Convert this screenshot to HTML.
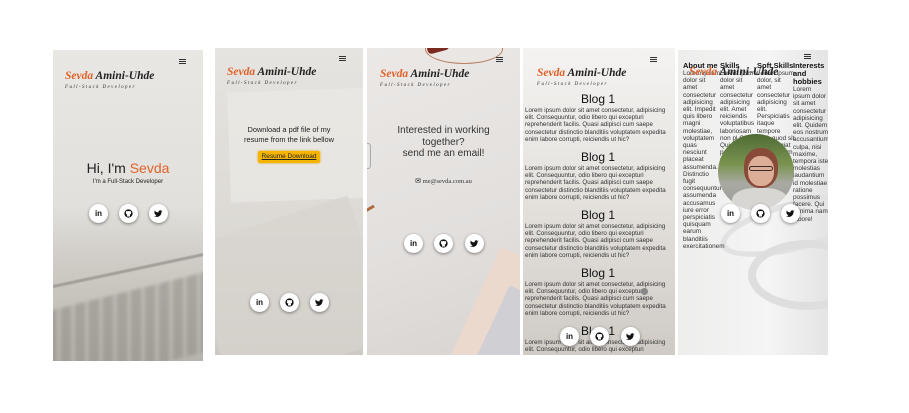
<!DOCTYPE html>
<html><head><meta charset="utf-8"><style>
*{margin:0;padding:0;box-sizing:border-box}
body{width:909px;height:413px;background:#fff;position:relative;overflow:hidden;font-family:"Liberation Sans",sans-serif;color:#222}
.p{position:absolute;overflow:hidden}
.a{position:absolute}
.ham{position:absolute;width:7px;height:5px;border-top:1px solid #333;border-bottom:1px solid #333}
.ham:after{content:"";position:absolute;left:0;right:0;top:1px;border-top:1px solid #333}
.logo{position:absolute;font-family:"Liberation Serif",serif;font-style:italic;font-weight:bold;font-size:11.5px;white-space:nowrap;color:#222}
.logo b{color:#e0632a}
.sub{position:absolute;font-family:"Liberation Serif",serif;font-style:italic;font-size:5px;letter-spacing:1.4px;color:#333;white-space:nowrap}
.ic{position:absolute;width:19px;height:19px;border-radius:50%;background:#fff;box-shadow:0 1px 3px rgba(0,0,0,.45);font-size:8px;font-weight:bold;text-align:center;line-height:19px;color:#111}
.ic svg{position:absolute;left:5px;top:5px;width:9px;height:9px}
.ct{position:absolute;text-align:center;white-space:nowrap}
.blog{position:absolute;left:2px;width:146px;font-size:6.2px;line-height:7.2px;color:#333}
.blog h3{text-align:center;font-size:12px;line-height:13px;font-weight:normal;color:#111;margin-bottom:1px}
.col{position:absolute;font-size:6.4px;line-height:7.2px;color:#333}
.col h4{font-size:7.5px;line-height:8px;color:#111}
</style></head><body>
<svg width="0" height="0" style="position:absolute">
<symbol id="gh" viewBox="0 0 24 24"><circle cx="12" cy="12" r="11" fill="#111"/><path d="M8 20v-3c0-1 .5-1.5 1-2-3-.5-4-2-4-5 0-1 .4-2 1-2.6-.2-.6-.2-1.6.2-2.4 1 0 2 .6 2.6 1.1a8 8 0 0 1 6.4 0C15.8 5.6 16.8 5 17.8 5c.4.8.4 1.8.2 2.4.6.6 1 1.6 1 2.6 0 3-1 4.5-4 5 .5.5 1 1 1 2v3z" fill="#fff"/></symbol>
<symbol id="tw" viewBox="0 0 24 24"><path d="M23 4a9 9 0 0 1-3 1 4.5 4.5 0 0 0-8 3v1A11 11 0 0 1 2 4s-4 9 5 13a12 12 0 0 1-7 2c9 5 20 0 20-11.5V7a8 8 0 0 0 3-3z" fill="#111"/></symbol>
</svg>

<!-- Panel 1 -->
<div class="p" style="left:53px;top:50px;width:150px;height:311px;background:linear-gradient(#e9e7e3 0%,#e2e0dc 50%,#cfccc6 68%,#b8b4ad 100%)">
 <div class="a" style="left:-20px;top:240px;width:200px;height:80px;transform:skewY(-14deg);background:repeating-linear-gradient(90deg,#8f8c86 0 10px,#b3afa8 10px 14px);opacity:.55;filter:blur(1.5px)"></div>
 <div class="a" style="left:-10px;top:218px;width:180px;height:3px;background:#a19e97;transform:skewY(-12deg);filter:blur(.6px)"></div>
 <div class="ham" style="left:126px;top:9px"></div>
 <div class="logo" style="left:12px;top:20px"><b>Sevda</b> Amini-Uhde</div>
 <div class="sub" style="left:12px;top:35px">Full-Stack Developer</div>
 <div class="ct" style="left:0;width:150px;top:110px;font-size:14px">Hi, I'm <span style="color:#e0632a">Sevda</span></div>
 <div class="ct" style="left:0;width:150px;top:129px;font-size:6px">I'm a Full-Stack Developer</div>
 <div class="ic" style="left:36px;top:154px">in</div>
 <div class="ic" style="left:66px;top:154px"><svg><use href="#gh"/></svg></div>
 <div class="ic" style="left:96px;top:154px"><svg><use href="#tw"/></svg></div>
</div>

<!-- Panel 2 -->
<div class="p" style="left:215px;top:48px;width:148px;height:307px;background:linear-gradient(#e6e4e0,#dcd9d4 60%,#cdc9c3)">
 <div class="a" style="left:14px;top:42px;width:150px;height:110px;background:#ebe9e6;transform:rotate(-2deg);opacity:.7"></div>
 <div class="a" style="left:-10px;top:170px;width:170px;height:150px;background:#d7d4cf;transform:rotate(-18deg);opacity:.7"></div>
 <div class="ham" style="left:124px;top:8px"></div>
 <div class="logo" style="left:12px;top:18px"><b>Sevda</b> Amini-Uhde</div>
 <div class="sub" style="left:12px;top:33px">Full-Stack Developer</div>
 <div class="ct" style="left:0;width:148px;top:77px;font-size:7.4px;line-height:9.5px">Download a pdf file of my<br>resume from the link bellow</div>
 <div class="a" style="left:43px;top:103px;width:62px;height:12px;background:#f5b400;border-radius:2px;box-shadow:0 0 2px #e0a000;font-size:6.5px;line-height:12px;text-align:center;text-decoration:underline">Resume Download</div>
 <div class="ic" style="left:35px;top:245px">in</div>
 <div class="ic" style="left:65px;top:245px"><svg><use href="#gh"/></svg></div>
 <div class="ic" style="left:95px;top:245px"><svg><use href="#tw"/></svg></div>
</div>

<!-- Panel 3 -->
<div class="p" style="left:367px;top:48px;width:153px;height:307px;background:linear-gradient(160deg,#ebe8e6,#e2dfdd 60%,#d8d4d2)">
 <div class="a" style="left:58px;top:-14px;width:78px;height:30px;border:1.5px solid #b88060;border-radius:50%"></div>
 <div class="a" style="left:60px;top:-6px;width:22px;height:10px;background:#7a2a1e;border-radius:4px;transform:rotate(-15deg)"></div>
 <div class="a" style="left:105px;top:210px;width:80px;height:120px;background:#ecd9ce;transform:rotate(25deg)"></div>
 <div class="a" style="left:120px;top:250px;width:80px;height:90px;background:#cfcfd4;transform:rotate(25deg)"></div>
 <div class="a" style="left:-10px;top:95px;width:14px;height:26px;background:#e6e4e2;border:1px solid #aaa;border-radius:3px"></div>
 <div class="a" style="left:-6px;top:160px;width:14px;height:3px;background:#b06a40;transform:rotate(-30deg)"></div>
 <div class="ham" style="left:129px;top:9px"></div>
 <div class="logo" style="left:13px;top:20px"><b>Sevda</b> Amini-Uhde</div>
 <div class="sub" style="left:13px;top:35px">Full-Stack Developer</div>
 <div class="ct" style="left:0;width:153px;top:77px;font-size:10px;line-height:11.5px;color:#333">Interested in working<br>together?<br>send me an email!</div>
 <div class="ct" style="left:0;width:153px;top:129px;font-size:6.5px;font-family:'Liberation Serif',serif;color:#333"><span style="font-family:'DejaVu Sans';font-size:7px;color:#111">✉</span> me@sevda.com.au</div>
 <div class="ic" style="left:37px;top:186px">in</div>
 <div class="ic" style="left:67px;top:186px"><svg><use href="#gh"/></svg></div>
 <div class="ic" style="left:98px;top:186px"><svg><use href="#tw"/></svg></div>
</div>

<!-- Panel 4 -->
<div class="p" style="left:523px;top:48px;width:152px;height:307px;background:linear-gradient(#f4f3f1,#e4e1dd 50%,#cfcac4)">
 <div class="ham" style="left:127px;top:9px"></div>
 <div class="logo" style="left:14px;top:19px"><b>Sevda</b> Amini-Uhde</div>
 <div class="sub" style="left:14px;top:34px">Full-Stack Developer</div>
 <div class="blog" style="top:45px"><h3>Blog 1</h3>Lorem ipsum dolor sit amet consectetur, adipisicing elit. Consequuntur, odio libero qui excepturi reprehenderit facilis. Quasi adipisci cum saepe consectetur distinctio blanditiis voluptatem expedita enim labore corrupti, reiciendis ut hic?</div>
 <div class="blog" style="top:103px"><h3>Blog 1</h3>Lorem ipsum dolor sit amet consectetur, adipisicing elit. Consequuntur, odio libero qui excepturi reprehenderit facilis. Quasi adipisci cum saepe consectetur distinctio blanditiis voluptatem expedita enim labore corrupti, reiciendis ut hic?</div>
 <div class="blog" style="top:161px"><h3>Blog 1</h3>Lorem ipsum dolor sit amet consectetur, adipisicing elit. Consequuntur, odio libero qui excepturi reprehenderit facilis. Quasi adipisci cum saepe consectetur distinctio blanditiis voluptatem expedita enim labore corrupti, reiciendis ut hic?</div>
 <div class="blog" style="top:219px"><h3>Blog 1</h3>Lorem ipsum dolor sit amet consectetur, adipisicing elit. Consequuntur, odio libero qui excepturi reprehenderit facilis. Quasi adipisci cum saepe consectetur distinctio blanditiis voluptatem expedita enim labore corrupti, reiciendis ut hic?</div>
 <div class="blog" style="top:277px"><h3>Blog 1</h3>Lorem ipsum dolor sit amet consectetur, adipisicing elit. Consequuntur, odio libero qui excepturi</div>
 <div class="a" style="left:118px;top:240px;width:7px;height:7px;border-radius:50%;background:#888"></div>
 <div class="ic" style="left:37px;top:279px">in</div>
 <div class="ic" style="left:67px;top:279px"><svg><use href="#gh"/></svg></div>
 <div class="ic" style="left:98px;top:279px"><svg><use href="#tw"/></svg></div>
</div>

<!-- Panel 5 -->
<div class="p" style="left:678px;top:50px;width:150px;height:305px;background:linear-gradient(90deg,#ededec,#f5f5f5 60%,#e4e4e4)">
 <div class="a" style="left:40px;top:150px;width:160px;height:50px;border-radius:50%;border:6px solid #e2e2e2;transform:rotate(-15deg)"></div>
 <div class="a" style="left:70px;top:190px;width:120px;height:70px;border-radius:50%;border:8px solid #dedede"></div>
 <div class="ham" style="left:126px;top:4px"></div>
 <div class="col" style="left:5px;top:12px;width:38px"><h4>About me</h4>Lorem ipsum dolor sit amet consectetur adipisicing elit. Impedit quis libero magni molestiae, voluptatem quas nesciunt placeat assumenda. Distinctio fugit consequuntur assumenda accusamus iure error perspiciatis quisquam earum blanditiis exercitationem</div>
 <div class="col" style="left:42px;top:12px;width:38px"><h4>Skills</h4>Lorem ipsum dolor sit amet consectetur adipisicing elit. Amet reiciendis voluptatibus laboriosam non pl Quia Qui perspiciatis obcaecati quos deleniti?</div>
 <div class="col" style="left:79px;top:12px;width:38px"><h4>Soft Skills</h4>Lorem ipsum dolor, sit amet consectetur adipisicing elit. Perspiciatis itaque tempore nihil, quod sit amet, fugiat quo dolorum rem nesciunt?</div>
 <div class="col" style="left:115px;top:12px;width:36px"><h4>Interests and hobbies</h4>Lorem ipsum dolor sit amet consectetur adipisicing elit. Quidem eos nostrum accusantium culpa, nisi maxime, tempora iste molestias laudantium id molestiae ratione possimus facere. Qui minima nam labore!</div>
 <div class="logo" style="left:11px;top:16px"><b>Sevda</b> Amini-Uhde</div>
 <div class="a" style="left:40px;top:84px;width:76px;height:76px;border-radius:50%;overflow:hidden;background:linear-gradient(#4f6a35,#7a9450 40%,#a9aaa2 65%,#9a9a96 100%)">
  <div class="a" style="left:26px;top:14px;width:34px;height:40px;border-radius:45%;background:#8a4a3a"></div>
  <div class="a" style="left:30px;top:22px;width:26px;height:30px;border-radius:45%;background:#dcae98"></div>
  <div class="a" style="left:31px;top:32px;width:24px;height:5px;border:1.5px solid #3a2a28;border-radius:3px"></div>
  <div class="a" style="left:14px;top:54px;width:56px;height:30px;border-radius:40% 40% 0 0;background:#d8d6d2"></div>
 </div>
 <div class="ic" style="left:43px;top:154px">in</div>
 <div class="ic" style="left:73px;top:154px"><svg><use href="#gh"/></svg></div>
 <div class="ic" style="left:103px;top:154px"><svg><use href="#tw"/></svg></div>
</div>
</body></html>
